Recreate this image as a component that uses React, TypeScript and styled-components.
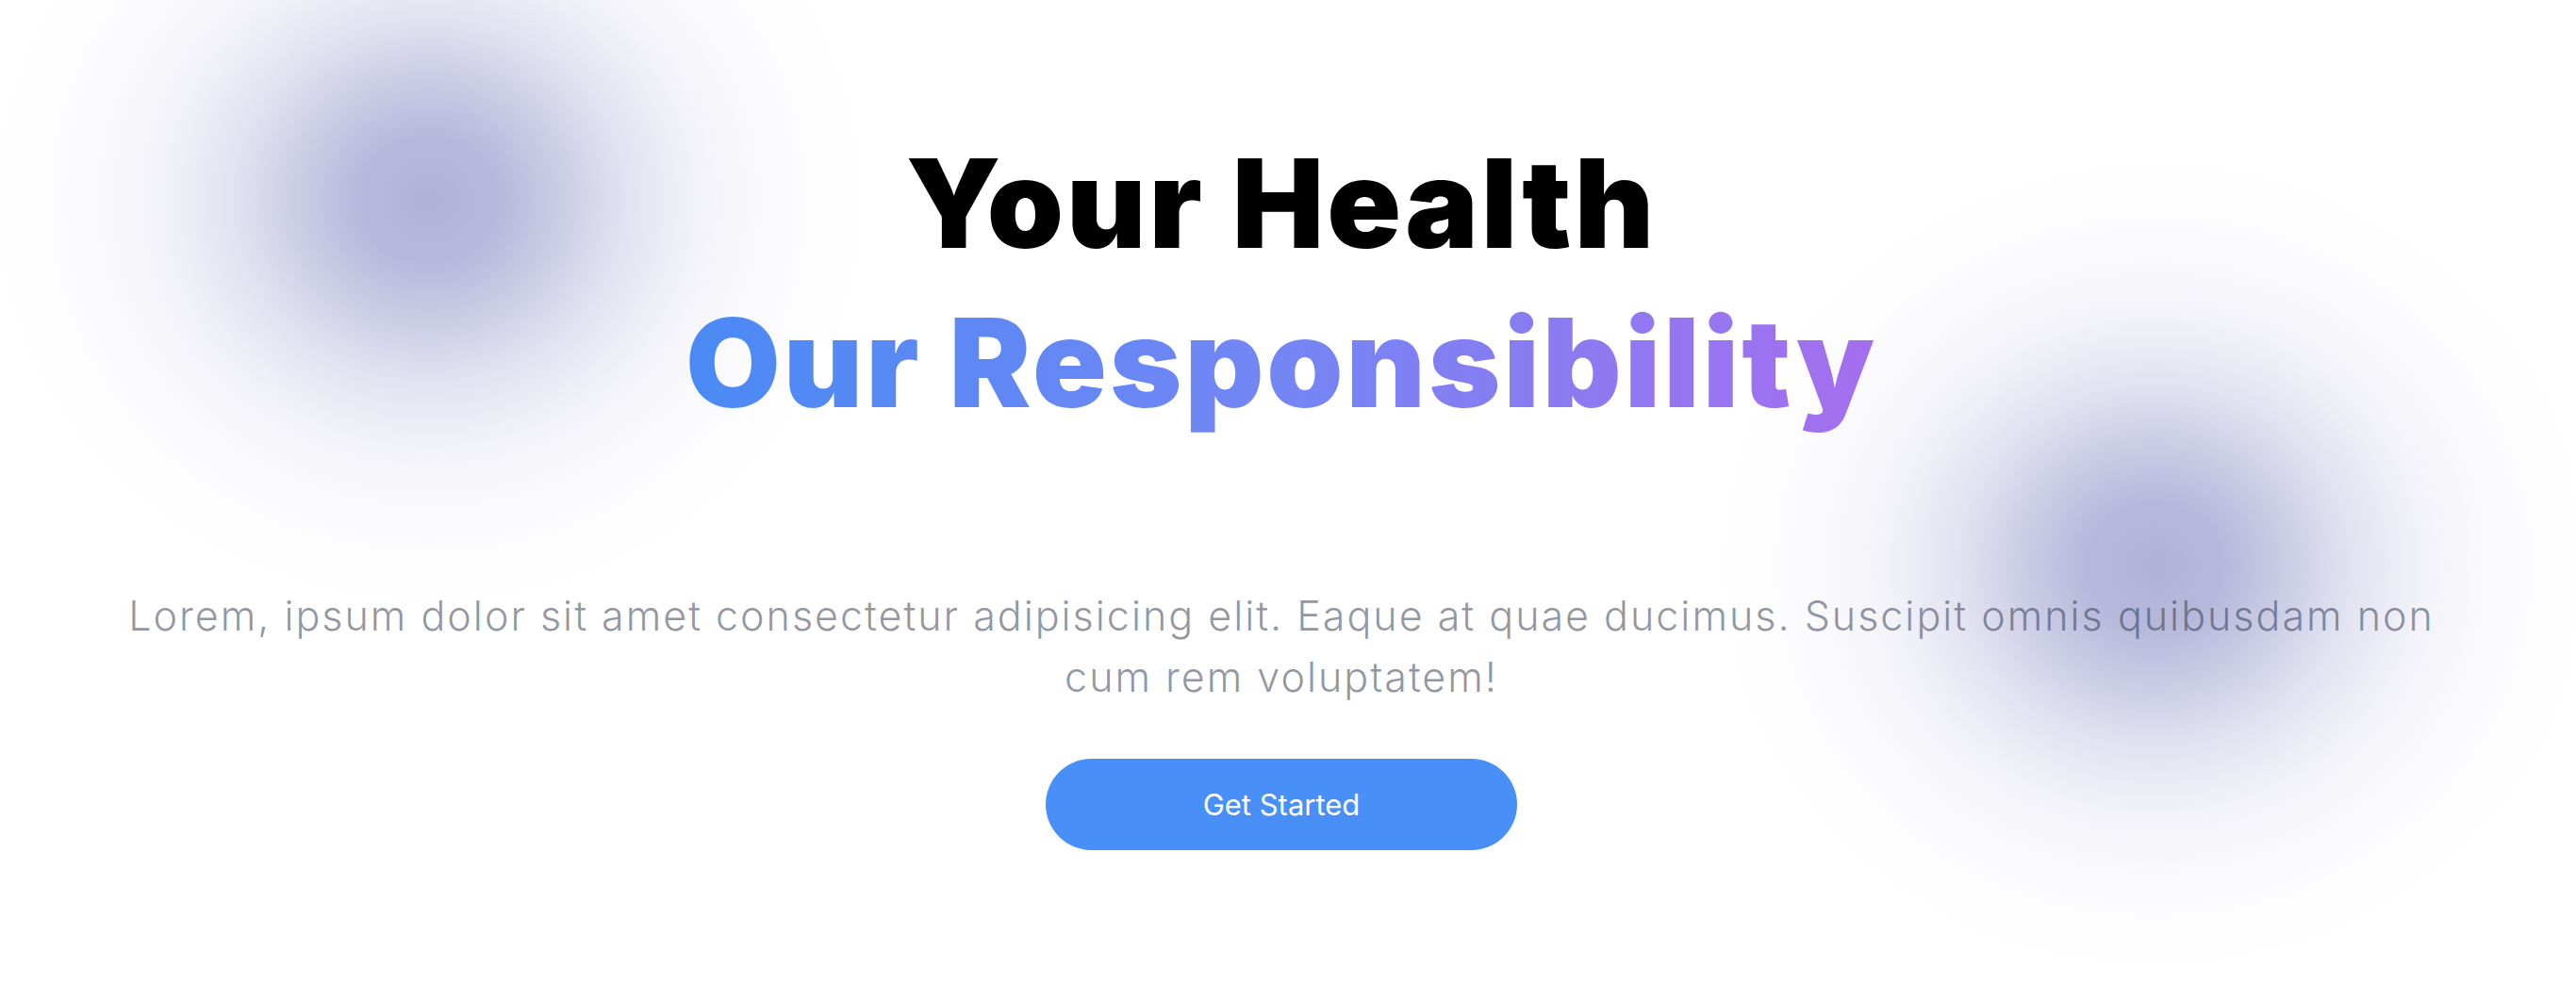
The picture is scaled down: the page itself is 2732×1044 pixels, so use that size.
import { createGlobalStyle, styled } from "styled-components";

const GlobalStyle = createGlobalStyle`
  * {
    box-sizing: border-box;
  }
  body {
    margin: 0;
    background: #fff;
    font-family: Inter, "Liberation Sans", sans-serif;
  }
`;

const Hero = styled.section`
  position: relative;
  min-height: 100vh;
  overflow: hidden;
  display: flex;
  flex-direction: column;
  align-items: center;
  padding: 131px 14px 0 0;
`;

// soft glow behind the text
const Blob = styled.div<{ $x: number; $y: number }>`
  position: absolute;
  left: ${(p) => p.$x - 480}px;
  top: ${(p) => p.$y - 445}px;
  width: 960px;
  height: 890px;
  background: radial-gradient(
    ellipse closest-side at center,
    rgba(97, 101, 177, 0.5) 0%,
    rgba(97, 101, 177, 0.46) 15%,
    rgba(97, 101, 177, 0.33) 29%,
    rgba(97, 101, 177, 0.18) 44%,
    rgba(97, 101, 177, 0.08) 60%,
    rgba(97, 101, 177, 0.035) 74%,
    rgba(97, 101, 177, 0.012) 88%,
    rgba(97, 101, 177, 0) 100%
  );
  z-index: 0;
`;

const Title = styled.h1`
  position: relative;
  z-index: 1;
  margin: 0;
  text-align: center;
  font-family: Inter, "Liberation Sans", sans-serif;
  font-weight: 900;
  font-size: 130px;
  letter-spacing: 3px;
  line-height: 169px;
  color: #000;
`;

const TitleLine = styled.span`
  display: block;
`;

const GradientLine = styled(TitleLine)`
  background: linear-gradient(90deg, #4a8af4 0%, #7486f4 50%, #a56eef 100%);
  -webkit-background-clip: text;
  background-clip: text;
  color: transparent;
`;

const Lead = styled.p`
  position: relative;
  z-index: 1;
  margin: 152px 0 0;
  max-width: 2490px;
  text-align: center;
  font-family: Inter, "Liberation Sans", sans-serif;
  font-weight: 300;
  font-size: 43px;
  letter-spacing: 2px;
  line-height: 65px;
  color: rgba(40, 48, 70, 0.5);
`;

const StartButton = styled.button`
  position: relative;
  z-index: 1;
  margin-top: 54px;
  width: 500px;
  height: 97px;
  border: none;
  border-radius: 49px;
  background: #488ff7;
  color: #fff;
  font-family: Inter, "Liberation Sans", sans-serif;
  font-size: 31px;
  font-weight: 400;
  cursor: pointer;
`;

export default function App() {
  return (
    <>
      <GlobalStyle />
      <Hero>
        <Blob $x={455} $y={212} />
        <Blob $x={2285} $y={600} />
        <Title>
          <TitleLine>Your Health</TitleLine>
          <GradientLine>Our Responsibility</GradientLine>
        </Title>
        <Lead>
          Lorem, ipsum dolor sit amet consectetur adipisicing elit. Eaque at quae ducimus. Suscipit omnis quibusdam non
          cum rem voluptatem!
        </Lead>
        <StartButton>Get Started</StartButton>
      </Hero>
    </>
  );
}
